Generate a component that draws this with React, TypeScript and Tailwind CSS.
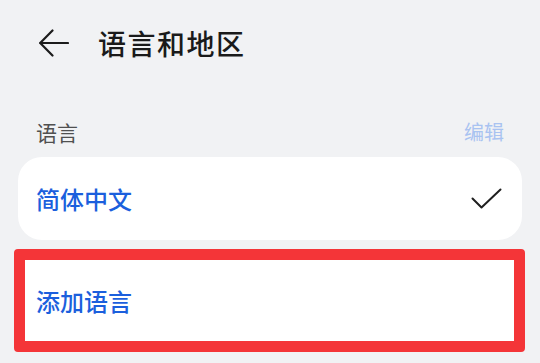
const font = { fontFamily: '"Noto Sans CJK SC", "Noto Sans", sans-serif' };

export default function App() {
  return (
    <div className="w-[540px] h-[363px] overflow-hidden bg-[#f1f2f4]" style={font}>
      {/* Header */}
      <header className="h-[86px] flex items-center pl-[39px]">
        <svg width="30" height="28" viewBox="0 0 30 28" fill="none" stroke="#1c1c1c" strokeWidth="2.2" strokeLinecap="round" strokeLinejoin="round">
          <path d="M29 14H1.5" />
          <path d="M13.5 1.5L1.2 14l12.3 12.5" />
        </svg>
        <h1 className="ml-[29px] text-[28px] leading-none font-medium text-[#1a1a1a] tracking-[1.5px]">语言和地区</h1>
      </header>

      {/* Section label */}
      <div className="mt-[32px] h-[28px] px-[36px] flex items-center justify-between">
        <span className="text-[21px] leading-none text-[#505050]">语言</span>
        <span className="text-[20px] leading-none text-[#a9c3f1]">编辑</span>
      </div>

      {/* Current language */}
      <div className="mt-[11px] mx-[18px] h-[83px] rounded-[24px] bg-white flex items-center justify-between pl-[18px] pr-[20px]">
        <span className="text-[24px] leading-none font-medium text-[#1b5fdd]">简体中文</span>
        <svg width="31" height="21" viewBox="0 0 31 21" fill="none" stroke="#1f1f1f" strokeWidth="2" strokeLinecap="round" strokeLinejoin="round">
          <path d="M1.5 10.5l9 9L29.5 1.5" />
        </svg>
      </div>

      {/* Add language (highlighted) */}
      <div className="mt-[9px] mx-[14px] w-[511px] rounded-[4px] border-[11px] border-[#f43538]">
        <div className="h-[81px] bg-white flex items-center pl-[11px]">
          <span className="text-[24px] leading-none font-medium text-[#1b5fdd]">添加语言</span>
        </div>
      </div>
    </div>
  );
}
